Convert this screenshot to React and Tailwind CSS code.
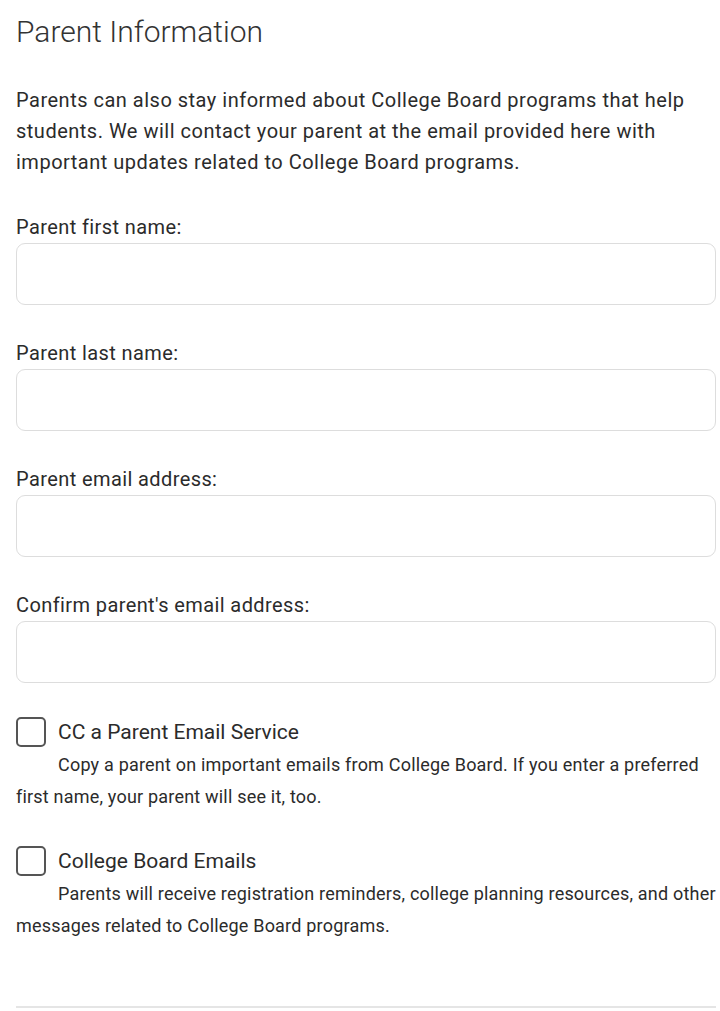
import { useState } from 'react'

const fields = [
  { id: 'first', label: 'Parent first name:' },
  { id: 'last', label: 'Parent last name:' },
  { id: 'email', label: 'Parent email address:' },
  { id: 'confirm', label: "Confirm parent's email address:" }
]

function CheckOption({ title, children, checked, onChange }) {
  return (
    <div>
      <label className="flex items-center gap-3 cursor-pointer">
        <input type="checkbox" checked={checked} onChange={onChange} className="sr-only" />
        <span className="w-[30px] h-[30px] rounded-[5px] border-2 border-[#555] bg-white shrink-0" />
        <span className="text-[21px] text-[#2b2b2b] leading-[30px]">{title}</span>
      </label>
      <p className="text-[18px] text-[#2b2b2b] leading-[32px] tracking-[0.2px] indent-[42px] mt-[2px]">{children}</p>
    </div>
  )
}

export default function App() {
  const [values, setValues] = useState({ first: '', last: '', email: '', confirm: '' })
  const [cc, setCc] = useState(false)
  const [cbEmails, setCbEmails] = useState(false)

  return (
    <div className="bg-white min-h-screen pl-4 pr-1 pt-[12px] font-['Roboto',sans-serif] text-[#2b2b2b]">
      {/* Header */}
      <h2 className="text-[30px] font-light leading-[40px] text-[#333]">Parent Information</h2>
      <p className="mt-[33px] text-[20px] leading-[31px] tracking-[0.5px] pr-3">
        Parents can also stay informed about College Board programs that help students. We will contact your parent at the email provided here with important updates related to College Board programs.
      </p>

      {/* Campos */}
      <div className="mt-[35px] flex flex-col gap-[34px]">
        {fields.map((f) => (
          <div key={f.id}>
            <label className="block text-[20px] leading-[28px] tracking-[0.4px] mb-[2px]">{f.label}</label>
            <input
              type="text"
              value={values[f.id]}
              onChange={(e) => setValues({ ...values, [f.id]: e.target.value })}
              className="w-full h-[62px] px-4 rounded-[9px] border border-[#ddd] bg-white outline-none"
            />
          </div>
        ))}
      </div>

      {/* Opciones */}
      <div className="mt-[34px] flex flex-col gap-[33px]">
        <CheckOption title="CC a Parent Email Service" checked={cc} onChange={() => setCc(!cc)}>
          Copy a parent on important emails from College Board. If you enter a preferred first name, your parent will see it, too.
        </CheckOption>
        <CheckOption title="College Board Emails" checked={cbEmails} onChange={() => setCbEmails(!cbEmails)}>
          Parents will receive registration reminders, college planning resources, and other messages related to College Board programs.
        </CheckOption>
      </div>

      <div className="mt-[64px] border-t-2 border-[#e5e5e5]" />
    </div>
  )
}
